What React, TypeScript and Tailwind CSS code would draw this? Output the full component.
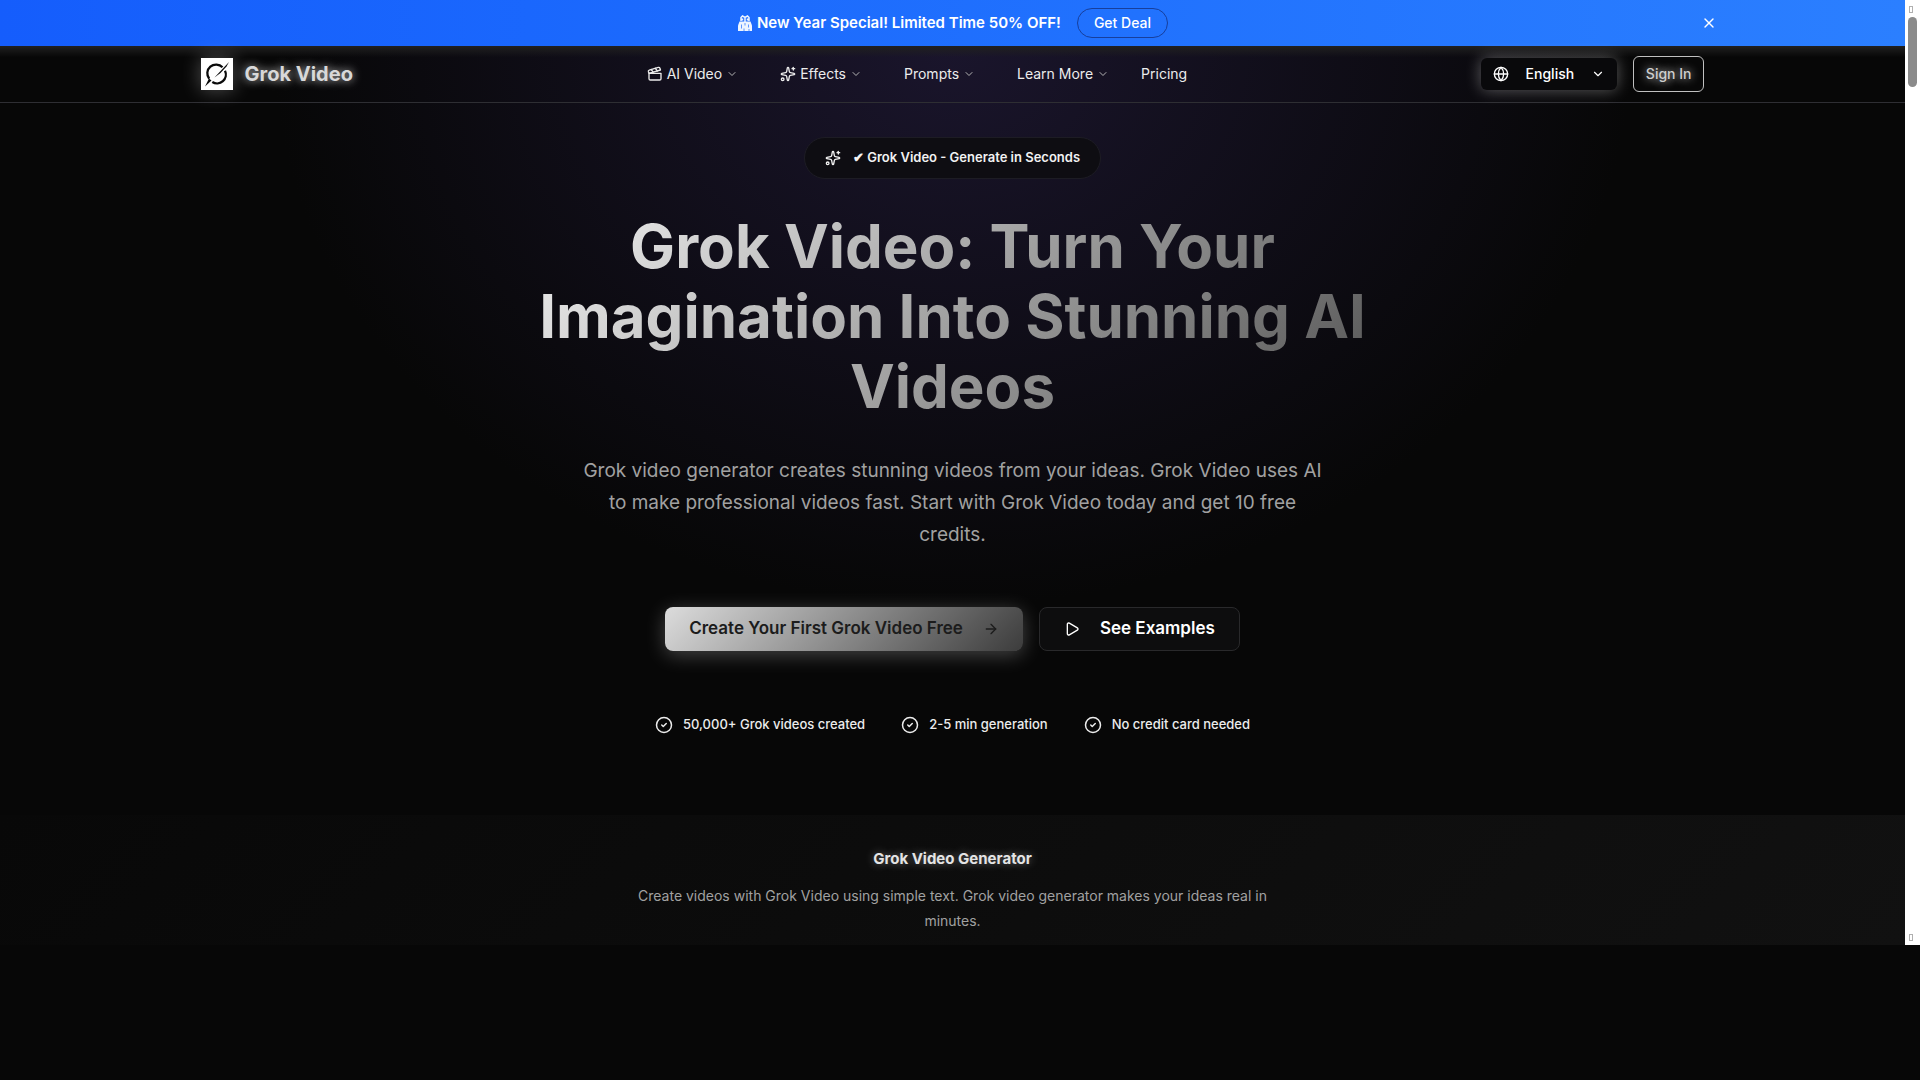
import {
  ArrowRight,
  ChevronDown,
  CircleCheck,
  Clapperboard,
  Globe,
  Play,
  Sparkles,
  X,
} from "lucide-react";

const navItems = [
  { label: "AI Video", icon: Clapperboard },
  { label: "Effects", icon: Sparkles },
  { label: "Prompts", icon: null },
  { label: "Learn More", icon: null },
];

const features = [
  "50,000+ Grok videos created",
  "2-5 min generation",
  "No credit card needed",
];

function GiftIcon() {
  return (
    <svg viewBox="0 0 16 16" className="h-4 w-4" fill="none">
      <path d="M2.500 6.500h11l1.500 4V16H1v-5.500z" fill="#eef5ff" />
      <path
        d="M4 6V2.500L5.500 1 8 2.500 10.500 1 12 2.500V6M8 2.500V7M5.500 3.500v2M10.500 3.500v2"
        stroke="#eef5ff"
        strokeWidth="1.500"
      />
      <path
        d="M4.500 9.500v4M8 8v2.500M11.500 9.500v3M7 13.500v2.500M12 14v2"
        stroke="#5d95ff"
      />
    </svg>
  );
}

function Logo() {
  return (
    <svg
      viewBox="0 0 32 32"
      className="h-8 w-8 bg-white shadow-[0_0_20px_rgba(255,255,255,0.3)]"
      fill="none"
    >
      <path
        d="M21.500 9.300A8.800 8.800 0 0 0 8.200 20.800"
        stroke="#0a0a0a"
        strokeWidth="2.300"
      />
      <path
        d="M11.300 24A8.800 8.800 0 0 0 24 12.800"
        stroke="#0a0a0a"
        strokeWidth="2.300"
      />
      <path d="M28 4 13.500 19.500l6-4.500L25.500 8.500z" fill="#0a0a0a" />
      <path d="M4 28.500 8 20.500l2.500 2z" fill="#0a0a0a" />
    </svg>
  );
}

function Banner() {
  return (
    <div className="bg-linear-to-r from-[#155dfc] to-[#2b7fff] text-white">
      <div className="mx-auto flex h-[46px] max-w-[1536px] items-center px-4">
        <div className="flex flex-1 items-center justify-center gap-4 pl-3">
          <p className="flex items-center gap-1 text-[15px] font-semibold">
            <GiftIcon />
            New Year Special! Limited Time 50% OFF!
          </p>
          <button className="h-[30px] rounded-full border border-[#173f9c] px-4 text-sm font-medium">
            Get Deal
          </button>
        </div>
        <button aria-label="Close" className="-mr-5 p-2">
          <X className="h-4 w-4" />
        </button>
      </div>
    </div>
  );
}

function Header() {
  return (
    <header className="border-b border-[#2e2e33] bg-linear-to-b from-[#202020] from-0% to-transparent to-20%">
      <div className="mx-auto flex h-14 max-w-[1536px] items-center justify-between px-4">
        <a href="#" className="flex items-center gap-3">
          <Logo />
          <span className="text-xl font-bold text-[#d8d8d8] [text-shadow:0_0_10px_rgba(255,255,255,0.8)]">
            Grok Video
          </span>
        </a>
        <nav className="flex items-center gap-8 text-sm text-[#ececec]">
          <div className="flex items-center gap-[42px]">
            {navItems.map(({ label, icon: Icon }) => (
              <button key={label} className="flex items-center gap-1">
                {Icon && <Icon className="h-4 w-4" />}
                {label}
                <ChevronDown className="h-3 w-3 text-[#b4b4b4]" />
              </button>
            ))}
          </div>
          <a href="#pricing">Pricing</a>
        </nav>
        <div className="flex items-center gap-4 text-sm font-medium">
          <button className="flex h-8 w-[136px] items-center rounded-md bg-[#09090b] px-3 text-white shadow-[0_0_16px_rgba(255,255,255,0.35)]">
            <Globe className="h-4 w-4" />
            <span className="flex-1 text-center">English</span>
            <ChevronDown className="h-3.5 w-3.5" />
          </button>
          <button className="h-9 rounded-md border border-[#c0c0c0] bg-[#080808] px-3 text-[#cfcfcf] [text-shadow:0_0_10px_rgba(255,255,255,0.9)]">
            Sign In
          </button>
        </div>
      </div>
    </header>
  );
}

function Hero() {
  return (
    <section className="flex flex-col items-center px-4 pt-[34px] pb-20 text-center">
      <div className="flex h-[42px] items-center gap-3 rounded-full border border-[#1d1c24] bg-[#0e0d12] px-5 text-[13px] font-semibold text-[#f2f2f2]">
        <Sparkles className="h-4 w-4" />
        <span>✔ Grok Video - Generate in Seconds</span>
      </div>
      <h1 className="mt-8 max-w-[896px] bg-linear-[135deg] from-[#f5f5f5] to-[#4d4d4d] bg-clip-text text-[60px] leading-[70px] font-bold text-transparent">
        Grok Video: Turn Your Imagination Into Stunning AI Videos
      </h1>
      <p className="mt-[34px] max-w-[748px] text-[19px] leading-8 text-[#a1a1a1]">
        Grok video generator creates stunning videos from your ideas. Grok Video
        uses AI to make professional videos fast. Start with Grok Video today
        and get 10 free credits.
      </p>
      <div className="mt-14 flex gap-4 text-[17px] font-semibold">
        <button className="flex h-11 items-center gap-5 rounded-lg bg-linear-[135deg] from-[#dcdcdc] to-[#3c3c3c] px-6 text-[#1c1c1c] shadow-[0_4px_20px_rgba(255,255,255,0.25)]">
          Create Your First Grok Video Free
          <ArrowRight className="h-4 w-4" />
        </button>
        <button className="flex h-11 items-center gap-5 rounded-lg border border-[#29292b] bg-[#0d0d0e] px-6 text-white">
          <Play className="h-4 w-4" />
          See Examples
        </button>
      </div>
      <ul className="mt-16 flex gap-9 text-[13px] font-medium text-[#ececec]">
        {features.map((feature) => (
          <li key={feature} className="flex items-center gap-2.5">
            <CircleCheck className="h-[18px] w-[18px]" />
            {feature}
          </li>
        ))}
      </ul>
    </section>
  );
}

function Intro() {
  return (
    <section className="flex flex-1 flex-col items-center bg-linear-[135deg] from-[#080808] to-[#111111] px-4 pt-8 pb-3 text-center">
      <h2 className="text-[15px] leading-6 font-bold text-[#e4e4e4] [text-shadow:0_0_10px_rgba(255,255,255,0.4)]">
        Grok Video Generator
      </h2>
      <p className="mt-3 max-w-[672px] text-sm leading-[25px] text-[#a1a1a1]">
        Create videos with Grok Video using simple text. Grok video generator
        makes your ideas real in minutes.
      </p>
    </section>
  );
}

function Scrollbar() {
  return (
    <div className="flex w-[15px] flex-col items-center justify-between bg-white pb-1">
      <div className="flex flex-col items-center gap-1 pt-1.5">
        <span className="mr-1 h-[7px] w-1 border border-[#b0b0b0]" />
        <span className="h-[70px] w-[9px] rounded-full bg-[#8b8b8b]" />
      </div>
      <span className="mr-1 h-[7px] w-1 border border-[#b0b0b0]" />
    </div>
  );
}

export default function App() {
  return (
    <div className="min-h-screen bg-[#070707] font-['Inter','Liberation_Sans',sans-serif]">
      <div className="flex">
        <div className="flex min-w-0 flex-1 flex-col">
          <Banner />
          <div className="bg-[radial-gradient(ellipse_680px_560px_at_50%_0%,#1a152c,transparent)]">
            <Header />
            <Hero />
          </div>
          <Intro />
        </div>
        <Scrollbar />
      </div>
    </div>
  );
}
